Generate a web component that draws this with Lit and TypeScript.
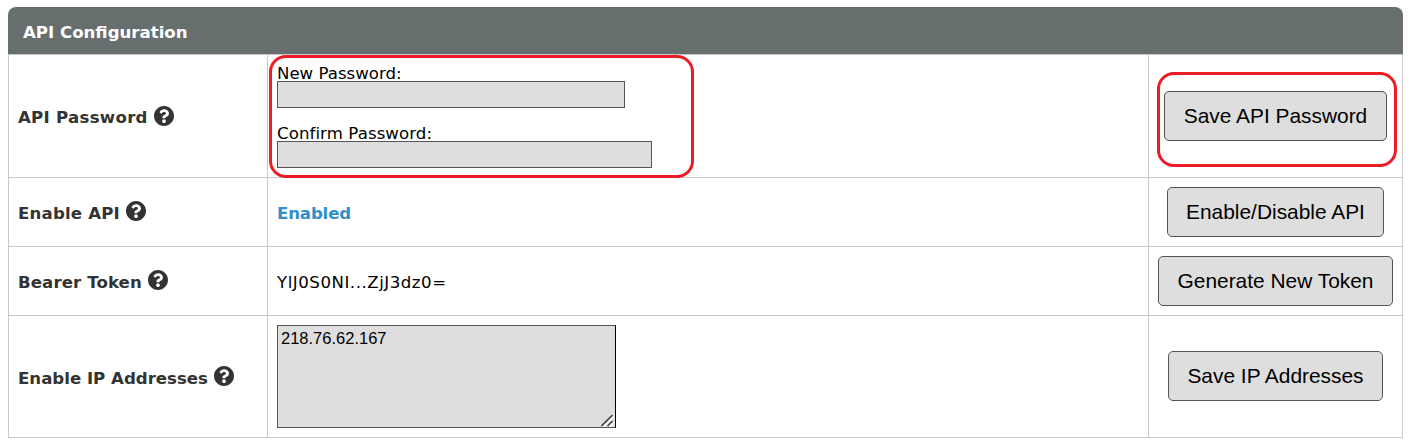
import { LitElement, html, css } from "lit";
import { customElement } from "lit/decorators.js";

const helpIcon = html`<svg class="help" viewBox="8 8 496 496" aria-hidden="true">
  <path fill="currentColor" d="M504 256c0 136.997-111.043 248-248 248S8 392.997 8 256C8 119.083 119.043 8 256 8s248 111.083 248 248zM262.655 90c-54.497 0-89.255 22.957-116.549 63.758-3.536 5.286-2.353 12.415 2.715 16.258l34.699 26.31c5.205 3.947 12.621 3.008 16.665-2.122 17.864-22.658 30.113-35.797 57.303-35.797 20.429 0 45.698 13.148 45.698 32.958 0 14.976-12.363 22.667-32.534 33.976C247.128 238.528 216 254.941 216 296v4c0 6.627 5.373 12 12 12h56c6.627 0 12-5.373 12-12v-1.333c0-28.462 83.186-29.647 83.186-106.667 0-58.002-60.165-102-116.531-102zM256 338c-25.365 0-46 20.635-46 46 0 25.364 20.635 46 46 46s46-20.636 46-46c0-25.365-20.635-46-46-46z"/>
</svg>`;

@customElement("app-root")
export class AppRoot extends LitElement {
  static styles = css`
    :host {
      display: block;
      height: 445px;
      box-sizing: border-box;
      padding: 7px 8px 0;
      background: #fff;
      color: #000;
      font: 16.6px/20px "DejaVu Sans", Verdana, sans-serif;
    }
    * { box-sizing: border-box; }
    .panel { width: 1395px; }
    .title {
      height: 47px;
      padding: 16px 15px 0;
      border-radius: 8px 8px 0 0;
      background: #666f6e;
      color: #fff;
      font-weight: bold;
    }
    .table {
      display: grid;
      grid-template-columns: 258px 880px 253px;
      grid-template-rows: 122px 68px 68px 121px;
      gap: 1px;
      padding: 1px;
      background: #c8c8c8;
    }
    .cell {
      display: flex;
      align-items: center;
      background: #fff;
      padding: 0 9px;
      min-width: 0;
    }
    .label {
      color: #333;
      font-weight: bold;
      gap: 6px;
      padding-top: 3px;
      white-space: nowrap;
    }
    .t1 { letter-spacing: 0.28px; }
    .t3 { letter-spacing: 0.08px; }
    .t4 { letter-spacing: 0.18px; }
    .t5 { letter-spacing: -0.15px; }
    .t6 { letter-spacing: 0.1px; }
    .t7 { letter-spacing: 0.53px; }
    .t8 { padding-top: 2px; }
    .help { width: 20px; height: 20px; flex: none; margin-bottom: 4px; }
    .t4 + .help, .t6 + .help { margin-bottom: 6px; }
    .action { justify-content: center; padding: 0; }
    .fields { flex-direction: column; align-items: flex-start; justify-content: flex-start; padding-top: 8px; position: relative; }
    .field-label { height: 18px; line-height: 22px; }
    input, textarea {
      display: block;
      margin: 0;
      border: 1px solid #555;
      border-radius: 0;
      background: #dedede;
      outline: none;
      font: 16.5px/20px "Liberation Sans", Arial, sans-serif;
      color: #000;
    }
    input { height: 27px; }
    .new { width: 348px; margin-bottom: 15px; }
    .confirm { width: 375px; }
    .area { position: relative; }
    textarea { width: 339px; height: 103px; padding: 2px 3px; border-right-color: #000; resize: none; }
    .grip { position: absolute; right: 2px; bottom: 1px; width: 13px; height: 13px; pointer-events: none; }
    .enabled { color: #3090c7; font-weight: bold; padding-top: 4px; }
    .token { padding-top: 4px; }
    button {
      height: 50px;
      padding: 0;
      border: 1px solid #555;
      border-radius: 5px;
      background: #dedede;
      color: #000;
      font: 20.9px/24px "Liberation Sans", Arial, sans-serif;
      white-space: nowrap;
    }
    .b1 { width: 223px; }
    .b2 { width: 217px; }
    .b3 { width: 235px; }
    .b4 { width: 215px; margin-bottom: 1px; }
    .marked { position: relative; }
    .mark {
      position: absolute;
      border: 3px solid #ed1c24;
      border-radius: 17px;
      pointer-events: none;
    }
    .mark-fields { left: 1px; top: 0; width: 425px; height: 123px; z-index: 1; }
    .mark-save { left: 8px; top: 17px; width: 240px; height: 95px; }
  `;

  render() {
    return html`
      <section class="panel">
        <div class="title">API Configuration</div>
        <div class="table">
          <div class="cell label"><span class="t1">API Password</span>${helpIcon}</div>
          <div class="cell fields">
            <label class="field-label" for="np">New Password:</label>
            <input class="new" id="np" type="password" />
            <label class="field-label t3" for="cp">Confirm Password:</label>
            <input class="confirm" id="cp" type="password" />
            <span class="mark mark-fields"></span>
          </div>
          <div class="cell action marked">
            <button class="b1">Save API Password</button>
            <span class="mark mark-save"></span>
          </div>

          <div class="cell label"><span class="t4">Enable API</span>${helpIcon}</div>
          <div class="cell enabled"><span class="t5">Enabled</span></div>
          <div class="cell action"><button class="b2">Enable/Disable API</button></div>

          <div class="cell label"><span class="t6">Bearer Token</span>${helpIcon}</div>
          <div class="cell token"><span class="t7">YlJ0S0NI...ZjJ3dz0=</span></div>
          <div class="cell action"><button class="b3">Generate New Token</button></div>

          <div class="cell label"><span class="t8">Enable IP Addresses</span>${helpIcon}</div>
          <div class="cell">
            <div class="area">
              <textarea .value=${"218.76.62.167"} spellcheck="false"></textarea>
              <svg class="grip" viewBox="0 0 13 13" aria-hidden="true">
                <path d="M1.5 12.5 12 2M7.5 12.5 12 8" stroke="#fff" stroke-width="1.4" transform="translate(.8 .8)"/>
                <path d="M.5 12 11.5 1M6.5 12 11.5 7" stroke="#444" stroke-width="1.6"/>
              </svg>
            </div>
          </div>
          <div class="cell action"><button class="b4">Save IP Addresses</button></div>
        </div>
      </section>
    `;
  }
}
